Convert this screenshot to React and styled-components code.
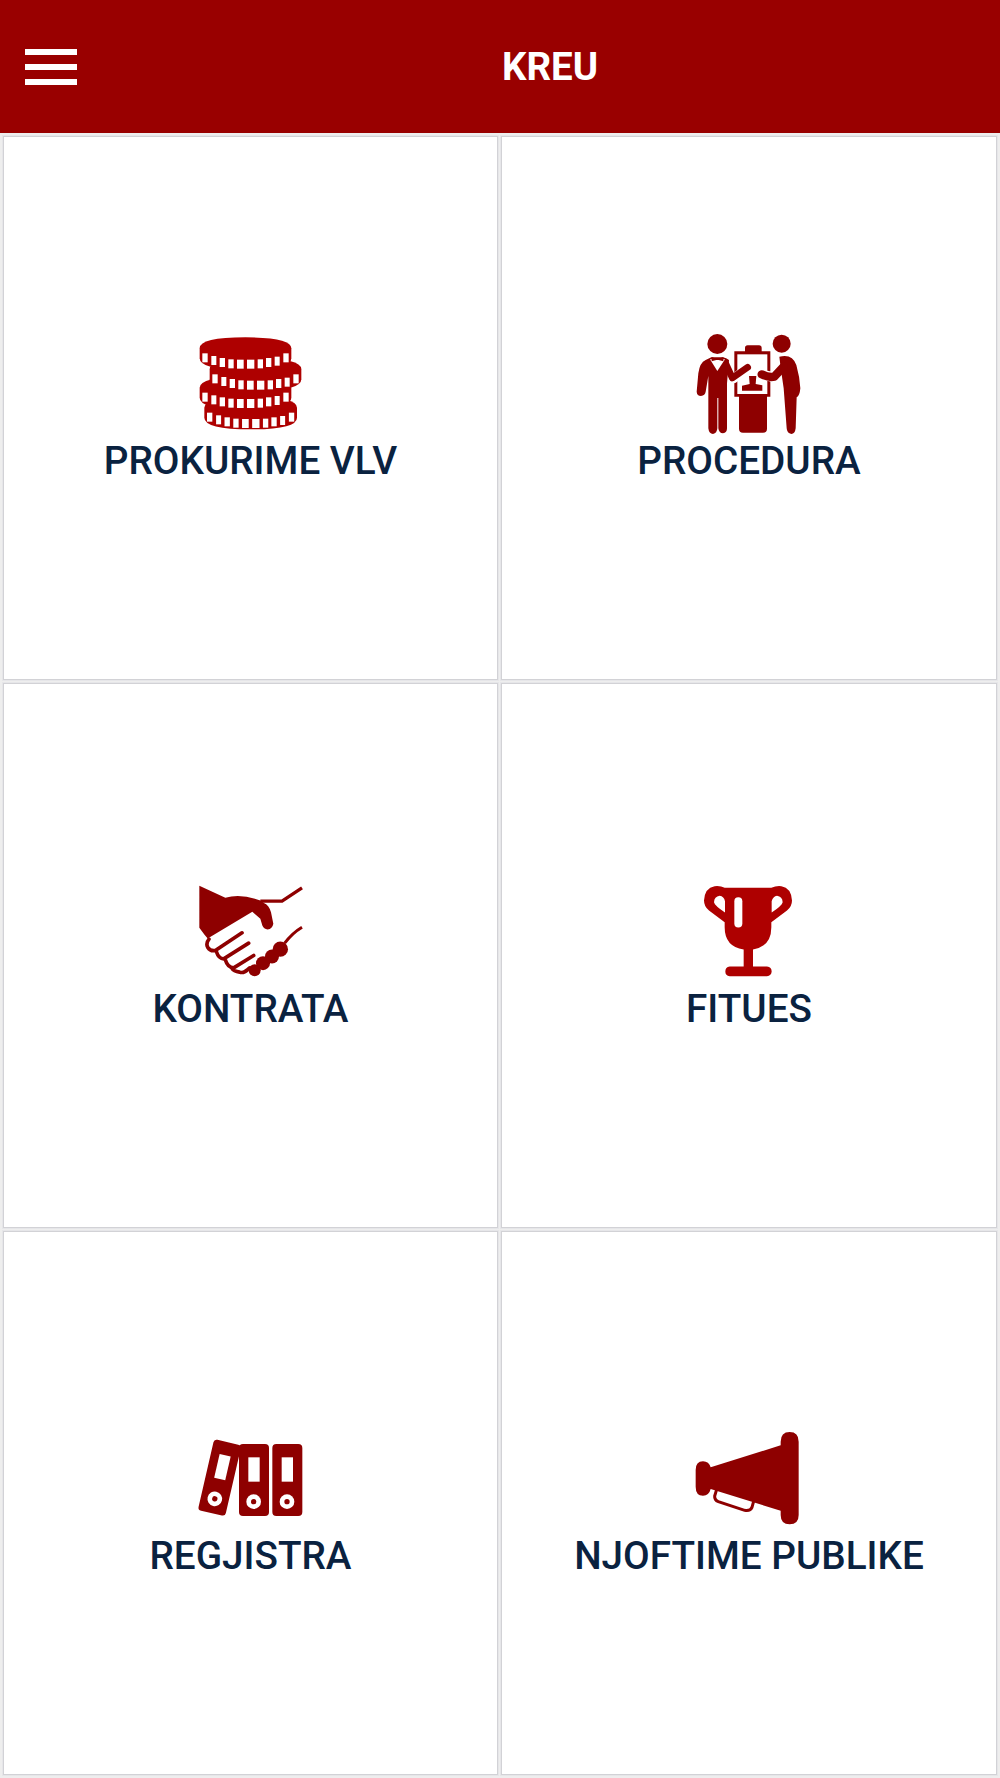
import React from "react";
import styled, { createGlobalStyle } from "styled-components";

const Global = createGlobalStyle`
  html, body { margin: 0; padding: 0; background: #eeeeee; }
  body { font-family: Roboto, "Liberation Sans", sans-serif; }
  * { box-sizing: border-box; }
`;

const Page = styled.div`
  width: 1000px;
  height: 1778px;
  display: flex;
  flex-direction: column;
  background: #eeeeee;
`;

const Header = styled.header`
  height: 133px;
  flex: none;
  display: flex;
  align-items: center;
  background: #990000;
`;

const MenuButton = styled.div`
  width: 100px;
  height: 100%;
  flex: none;
  display: flex;
  flex-direction: column;
  justify-content: center;
  gap: 9px;
  padding-left: 25px;
`;

const MenuBar = styled.span`
  display: block;
  width: 52px;
  height: 6px;
  background: #ffffff;
`;

const Title = styled.h1`
  flex: 1;
  margin: 0;
  padding-top: 2px;
  text-align: center;
  color: #ffffff;
  font-size: 38.5px;
  font-weight: 700;
  line-height: 1;
`;

const Grid = styled.main`
  display: grid;
  grid-template-columns: 495px 496px;
  grid-template-rows: 544px 545px 544px;
  gap: 3px;
  padding: 3px;
`;

const Tile = styled.a`
  display: flex;
  flex-direction: column;
  align-items: center;
  justify-content: center;
  background: #ffffff;
  border: 1px solid #d2d2d6;
  box-shadow: 0 0 0 1px #e6e6e9;
  text-decoration: none;
`;

const IconSvg = styled.svg`
  display: block;
  width: 140px;
  height: 106px;
  flex: none;
`;

const Label = styled.span`
  display: block;
  height: 48px;
  line-height: 48px;
  color: #0a2240;
  font-size: 38.7px;
  font-weight: 500;
  white-space: nowrap;
`;

const coinXs = [
  [0, 16, 0], [27, 15, 8], [52, 16, 14], [78, 16, 18], [104, 20, 19],
  [134, 22, 19], [166, 16, 18], [191, 16, 14], [217, 15, 10], [243, 16, 0],
];

const Coin = ({ x, y, w = 275 }) => {
  const scale = w / 275;
  return (
    <g>
      <path
        fill="#ae0000"
        d={`M${x} ${y + 33} Q${x} ${y} ${x + w / 2} ${y} Q${x + w} ${y} ${x + w} ${y + 33} V${y + 63} Q${x + w} ${y + 98} ${x + w / 2} ${y + 98} Q${x} ${y + 98} ${x} ${y + 63} Z`}
      />
      {coinXs.map(([dx, cw, dy], i) => (
        <rect key={i} x={x + 8 + dx * scale} y={y + 48 + dy} width={cw} height="27" fill="#fff" />
      ))}
    </g>
  );
};

const Coins = () => (
  <IconSvg viewBox="2 33 420 318">
    <Coin x={72} y={230} w={278} />
    <Coin x={58} y={170} />
    <Coin x={88} y={115} />
    <Coin x={58} y={52} />
  </IconSvg>
);

const Procedure = () => (
  <IconSvg viewBox="-2 33 420 318" fill="#8e0000">
    <path d="M196 94 V84 Q196 76 204 76 H238 Q246 76 246 84 V94 H272 V230 H262 V326 Q262 338 250 338 H190 Q178 338 178 326 V230 H164 V94 Z" />
    <rect x="173" y="103" width="90" height="119" fill="#fff" />
    <path d="M208 168 H230 L228 192 L248 196 V212 H187 V197 L210 192 Z" />
    <circle cx="113" cy="72" r="30" />
    <path d="M78 120 Q60 128 56 160 L51 215 Q52 228 64 228 Q76 226 78 215 L86 168 V325 Q88 342 100 342 Q112 340 113 325 V234 H116 V325 Q118 340 130 340 Q142 338 142 325 V190 L148 120 Q140 114 130 112 H95 Z" />
    <path fill="none" stroke="#fff" strokeWidth="27" strokeLinecap="round" strokeLinejoin="round" d="M162 176 L204 142" />
    <path fill="none" stroke="#8e0000" strokeWidth="20" strokeLinecap="round" strokeLinejoin="round" d="M138 130 L158 174 L204 142" />
    <path fill="#fff" d="M91 118 L136 118 L113 153 Z" />
    <path fill="#8e0000" d="M96 111 L110 116 H117 L131 111 V124 L117 120 H110 L96 124 Z" />
    <path d="M299 110 Q338 100 350 135 Q360 170 362 205 Q360 228 351 232 L348 325 Q346 342 335 342 Q322 340 321 325 L312 205 L304 150 Z" />
    <path fill="none" stroke="#fff" strokeWidth="30" strokeLinecap="round" strokeLinejoin="round" d="M246 164 L275 170" />
    <path fill="none" stroke="#8e0000" strokeWidth="25" strokeLinecap="round" strokeLinejoin="round" d="M246 163 Q268 174 284 170 L312 140" />
    <circle cx="306" cy="71" r="27" />
  </IconSvg>
);

const Handshake = () => (
  <IconSvg viewBox="2 25.5 420 318" fill="#8e0000">
    <path d="M57 46 L135 82 Q180 68 240 90 L252 98 Q266 104 272 125 L279 160 Q276 176 262 177 Q250 176 246 165 L240 145 L216 124 L82 204 L72 192 L57 172 Z" />
    <path fill="none" stroke="#8e0000" strokeWidth="10" d="M240 92 H305 L365 52" />
    <path fill="none" stroke="#8e0000" strokeWidth="11" strokeLinecap="round" d="M185 187 L105 240 Q90 243 82 230 Q76 218 86 206 M205 218 L130 265 Q115 265 108 243 M220 255 L160 292 Q142 292 135 268 M208 292 Q190 310 178 305 Q160 302 155 294" />
    <circle cx="223" cy="299" r="18" />
    <circle cx="248" cy="278" r="21" />
    <circle cx="275" cy="258" r="21" />
    <circle cx="300" cy="236" r="23" />
    <path fill="none" stroke="#8e0000" strokeWidth="9" d="M313 218 Q335 188 365 170" />
  </IconSvg>
);

const Trophy = () => (
  <IconSvg viewBox="-2 25.5 420 318" fill="#ae0000">
    <path fillRule="evenodd" d="M135 52 H275 Q290 45 305 47 Q335 52 337 90 Q337 108 322 120 L275 155 V170 Q275 228 220 237 V288 H262 Q276 290 276 303 Q275 316 262 317 H150 Q137 316 137 303 Q137 290 150 288 H192 V237 Q135 228 135 170 V155 L88 120 Q73 108 73 90 Q75 52 105 47 Q122 45 135 52 Z M136 126 V92 Q133 78 120 76 Q104 78 103 95 Q105 105 136 126 Z M276 126 V92 Q280 78 292 76 Q308 78 309 95 Q307 105 276 126 Z" />
    <rect x="164" y="80" width="24" height="91" rx="12" fill="#fff" />
  </IconSvg>
);

const Binder = ({ x }) => (
  <g>
    <rect x={x} y="72" width="90" height="216" rx="12" fill="#8e0000" />
    <rect x={x + 28} y="112" width="34" height="73" fill="#fff" />
    <circle cx={x + 44} cy="245" r="22" fill="#fff" />
    <circle cx={x + 44} cy="245" r="8" fill="#8e0000" />
  </g>
);

const Binders = () => (
  <IconSvg viewBox="2 18 420 318">
    <g transform="rotate(13 118 173)">
      <rect x="76" y="64" width="84" height="218" rx="10" fill="#8e0000" />
      <rect x="102" y="104" width="34" height="73" fill="#fff" />
      <circle cx="118" cy="238" r="22" fill="#fff" />
      <circle cx="118" cy="238" r="8" fill="#8e0000" />
    </g>
    <Binder x={176} />
    <Binder x={276} />
  </IconSvg>
);

const Megaphone = () => (
  <IconSvg viewBox="-2 18 420 318">
    <path fill="#fff" stroke="#8e0000" strokeWidth="9" d="M112 205 L105 228 Q104 240 116 245 L195 271 Q212 274 217 262 L223 240 Z" />
    <path fill="#8e0000" d="M48 150 Q48 124 70 124 Q88 124 93 142 L303 76 V65 Q303 36 330 36 Q357 36 357 65 V285 Q357 313 330 313 Q303 313 303 285 V272 L93 207 Q88 227 70 227 Q48 227 48 200 Z" />
  </IconSvg>
);

const items = [
  ["PROKURIME VLV", Coins],
  ["PROCEDURA", Procedure],
  ["KONTRATA", Handshake],
  ["FITUES", Trophy],
  ["REGJISTRA", Binders],
  ["NJOFTIME PUBLIKE", Megaphone],
];

export default function App() {
  return (
    <Page>
      <Global />
      <Header>
        <MenuButton>
          <MenuBar />
          <MenuBar />
          <MenuBar />
        </MenuButton>
        <Title>KREU</Title>
      </Header>
      <Grid>
        {items.map(([label, Icon]) => (
          <Tile key={label}>
            <Icon />
            <Label>{label}</Label>
          </Tile>
        ))}
      </Grid>
    </Page>
  );
}
